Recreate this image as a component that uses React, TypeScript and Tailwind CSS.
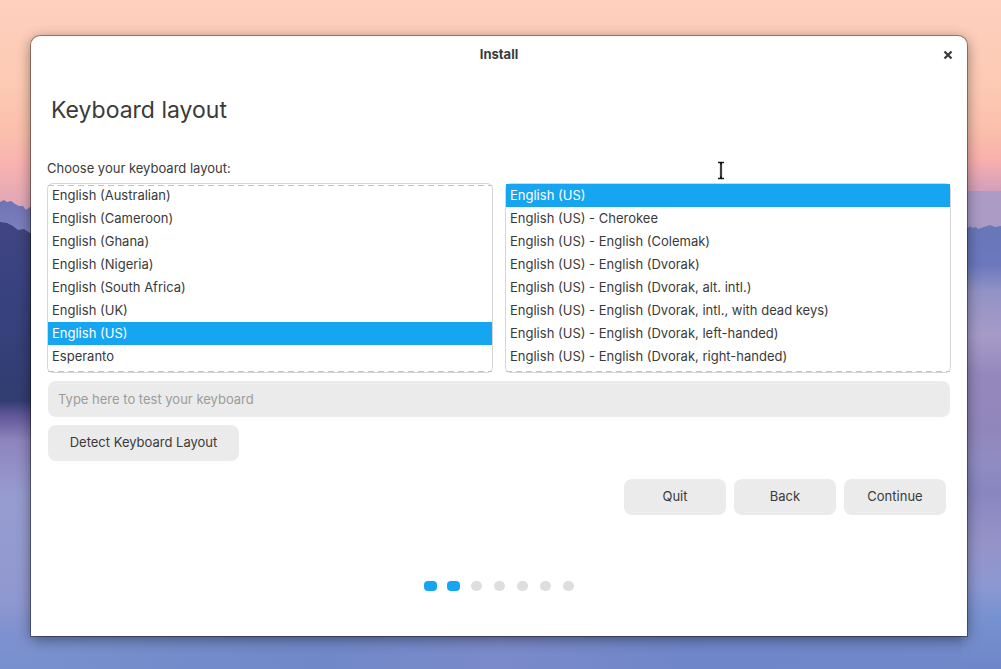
import { useState } from 'react'
import clsx from 'clsx'

const languages = [
  'English (Australian)',
  'English (Cameroon)',
  'English (Ghana)',
  'English (Nigeria)',
  'English (South Africa)',
  'English (UK)',
  'English (US)',
  'Esperanto',
]

const variants = [
  'English (US)',
  'English (US) - Cherokee',
  'English (US) - English (Colemak)',
  'English (US) - English (Dvorak)',
  'English (US) - English (Dvorak, alt. intl.)',
  'English (US) - English (Dvorak, intl., with dead keys)',
  'English (US) - English (Dvorak, left-handed)',
  'English (US) - English (Dvorak, right-handed)',
]

const STEPS = 7
const CURRENT_STEP = 2

function Wallpaper() {
  return (
    <svg
      className="absolute inset-0 h-full w-full"
      viewBox="0 0 1001 669"
      preserveAspectRatio="none"
      aria-hidden="true"
    >
      <defs>
        <linearGradient id="sky" x1="0" y1="0" x2="0" y2="210" gradientUnits="userSpaceOnUse">
          <stop offset="0" stopColor="#fed0bd" />
          <stop offset="0.4" stopColor="#fdcab4" />
          <stop offset="0.6" stopColor="#fbc1ad" />
          <stop offset="0.76" stopColor="#f9b0ac" />
          <stop offset="0.9" stopColor="#d3a0ba" />
          <stop offset="1" stopColor="#c49dbe" />
        </linearGradient>
        <linearGradient id="skyLeft" x1="0" y1="130" x2="0" y2="210" gradientUnits="userSpaceOnUse">
          <stop offset="0" stopColor="#fbc1ad" />
          <stop offset="0.4" stopColor="#f9b3b0" />
          <stop offset="1" stopColor="#dda6b8" />
        </linearGradient>
        <linearGradient id="haze" x1="0" y1="200" x2="0" y2="235" gradientUnits="userSpaceOnUse">
          <stop offset="0" stopColor="#7073b3" />
          <stop offset="1" stopColor="#7f82c0" />
        </linearGradient>
        <linearGradient id="forest" x1="0" y1="220" x2="0" y2="410" gradientUnits="userSpaceOnUse">
          <stop offset="0" stopColor="#41457f" />
          <stop offset="0.3" stopColor="#3a4380" />
          <stop offset="1" stopColor="#313c70" />
        </linearGradient>
        <linearGradient id="mistLeft" x1="0" y1="400" x2="0" y2="669" gradientUnits="userSpaceOnUse">
          <stop offset="0" stopColor="#313c70" />
          <stop offset="0.06" stopColor="#62589a" />
          <stop offset="0.15" stopColor="#8e84bd" />
          <stop offset="0.36" stopColor="#979cd0" />
          <stop offset="0.75" stopColor="#8f98cf" />
          <stop offset="0.86" stopColor="#7f91d0" />
          <stop offset="1" stopColor="#7890cd" />
        </linearGradient>
        <linearGradient id="mistRight" x1="0" y1="225" x2="0" y2="669" gradientUnits="userSpaceOnUse">
          <stop offset="0" stopColor="#6877b8" />
          <stop offset="0.09" stopColor="#6b78bd" />
          <stop offset="0.15" stopColor="#9392c5" />
          <stop offset="0.25" stopColor="#a69bc8" />
          <stop offset="0.34" stopColor="#9487bb" />
          <stop offset="0.46" stopColor="#9186bb" />
          <stop offset="0.53" stopColor="#908cc3" />
          <stop offset="0.6" stopColor="#8886c0" />
          <stop offset="0.72" stopColor="#9693c9" />
          <stop offset="0.81" stopColor="#8c98d2" />
          <stop offset="0.88" stopColor="#7792d0" />
          <stop offset="1" stopColor="#6f87c8" />
        </linearGradient>
        <linearGradient id="lake" x1="0" y1="0" x2="1" y2="0">
          <stop offset="0" stopColor="#7890cd" />
          <stop offset="0.3" stopColor="#7088c8" />
          <stop offset="0.5" stopColor="#7b8aca" />
          <stop offset="0.7" stopColor="#6f86c8" />
          <stop offset="1" stopColor="#7088c8" />
        </linearGradient>
      </defs>
      <rect width="1001" height="669" fill="url(#sky)" />
      <rect y="130" width="60" height="80" fill="url(#skyLeft)" />
      <path
        d="M0 202l4-2 3 2 4-1 4 3 4 2 4 0 3 4 4-3 4 1v210H0z"
        fill="url(#haze)"
      />
      <path d="M0 222l7 1 6 3 5 4 6-1 6 4 6 2v180H0z" fill="url(#forest)" />
      <rect y="400" width="500" height="269" fill="url(#mistLeft)" />
      <rect x="940" y="191" width="61" height="60" fill="#ab9bc5" />
      <path
        d="M940 228h28l2-2 2 2 4-1 2 2 3-1 3-1 6-2 5 2 6-1v443h-61z"
        fill="url(#mistRight)"
      />
      <rect x="36" y="625" width="926" height="44" fill="url(#lake)" />
    </svg>
  )
}

const undershoot =
  'pointer-events-none absolute inset-x-0 h-px bg-[repeating-linear-gradient(90deg,#c4c4c4_0_6px,transparent_6px_10px)]'

type OptionListProps = {
  label: string
  options: string[]
  value: string
  onChange: (value: string) => void
}

function OptionList({ label, options, value, onChange }: OptionListProps) {
  const atTop = value === options[0]

  return (
    <div className="relative flex-1 rounded-md border border-[#d6d6d6] pb-1">
      <ul role="listbox" aria-label={label}>
        {options.map((option) => (
          <li
            key={option}
            role="option"
            aria-selected={option === value}
            onClick={() => onChange(option)}
            className={clsx(
              'h-[23px] truncate px-1 leading-[23px]',
              option === value && 'bg-[#16a5f0] text-white',
            )}
          >
            {option}
          </li>
        ))}
      </ul>
      {!atTop && <div className={clsx(undershoot, 'top-px')} />}
      <div className={clsx(undershoot, 'bottom-0')} />
    </div>
  )
}

function NavButton({ children }: { children: string }) {
  return (
    <button className="h-9 w-[102px] rounded-lg bg-[#ebebeb] hover:bg-[#e2e2e2]">{children}</button>
  )
}

export default function App() {
  const [language, setLanguage] = useState('English (US)')
  const [variant, setVariant] = useState('English (US)')
  const [sample, setSample] = useState('')

  return (
    <div className="relative flex min-h-screen flex-col overflow-hidden px-[31px] pt-9 pb-[33px] font-['Inter',sans-serif] text-[13px] text-[#3a3a3a]">
      <Wallpaper />

      <main className="relative mr-[3px] flex flex-1 flex-col rounded-t-[9px] bg-white shadow-[0_0_0_1px_rgba(0,0,0,0.35),0_3px_14px_rgba(0,0,0,0.45)]">
        <header className="grid h-[38px] grid-cols-[1fr_auto_1fr] items-center px-3.5">
          <h1 className="col-start-2 font-bold">Install</h1>
          <button aria-label="Close" className="justify-self-end">
            <svg width="10" height="10" viewBox="0 0 10 10" fill="none">
              <path d="M1.5 1.5l7 7M8.5 1.5l-7 7" stroke="#3a3a3a" strokeWidth="2.2" />
            </svg>
          </button>
        </header>

        <section className="flex flex-col px-4">
          <h2 className="px-1 pt-5 text-[23px] leading-8">Keyboard layout</h2>

          <p className="pt-8 pb-1 leading-5">Choose your keyboard layout:</p>
          <div className="flex gap-3 pt-px">
            <OptionList label="Keyboard layout" options={languages} value={language} onChange={setLanguage} />
            <OptionList label="Layout variant" options={variants} value={variant} onChange={setVariant} />
          </div>

          <input
            type="text"
            aria-label="Type here to test your keyboard"
            placeholder="Type here to test your keyboard"
            value={sample}
            onChange={(e) => setSample(e.target.value)}
            className="mx-px mt-2 h-9 rounded-lg bg-[#ebebeb] px-2.5 outline-none placeholder:text-[#9b9b9b]"
          />
          <button className="mx-px mt-2 h-9 w-[191px] self-start rounded-lg bg-[#ebebeb] hover:bg-[#e2e2e2]">
            Detect Keyboard Layout
          </button>

          <div className="flex justify-end gap-2 pt-[18px] pr-[5px]">
            <NavButton>Quit</NavButton>
            <NavButton>Back</NavButton>
            <NavButton>Continue</NavButton>
          </div>
        </section>

        <div
          className="mt-auto flex justify-center pb-[45px]"
          role="progressbar"
          aria-label="Installation progress"
          aria-valuemin={0}
          aria-valuemax={STEPS}
          aria-valuenow={CURRENT_STEP}
        >
          {Array.from({ length: STEPS }, (_, i) => (
            <span key={i} className="flex w-[23px] justify-center">
              <span
                className={clsx(
                  'h-2.5',
                  i < CURRENT_STEP ? 'w-[13px] rounded-[4px] bg-[#16a5f0]' : 'w-[11px] rounded-full bg-[#dedede]',
                )}
              />
            </span>
          ))}
        </div>
      </main>

      {/* Text cursor */}
      <svg className="pointer-events-none absolute top-[161px] left-[715px]" width="12" height="20" viewBox="0 0 12 20" fill="none">
        <path d="M3 1.5h6M6 1.5v16M3 17.5h6" stroke="#bbbbbb" strokeWidth="2.6" />
        <path d="M3 1.5h6M3 17.5h6M5.5 2v15M6.5 2v15" stroke="#111111" strokeWidth="1" />
        <path d="M6 3.5v12" stroke="#ffffff" strokeWidth="0.4" />
      </svg>
    </div>
  )
}
